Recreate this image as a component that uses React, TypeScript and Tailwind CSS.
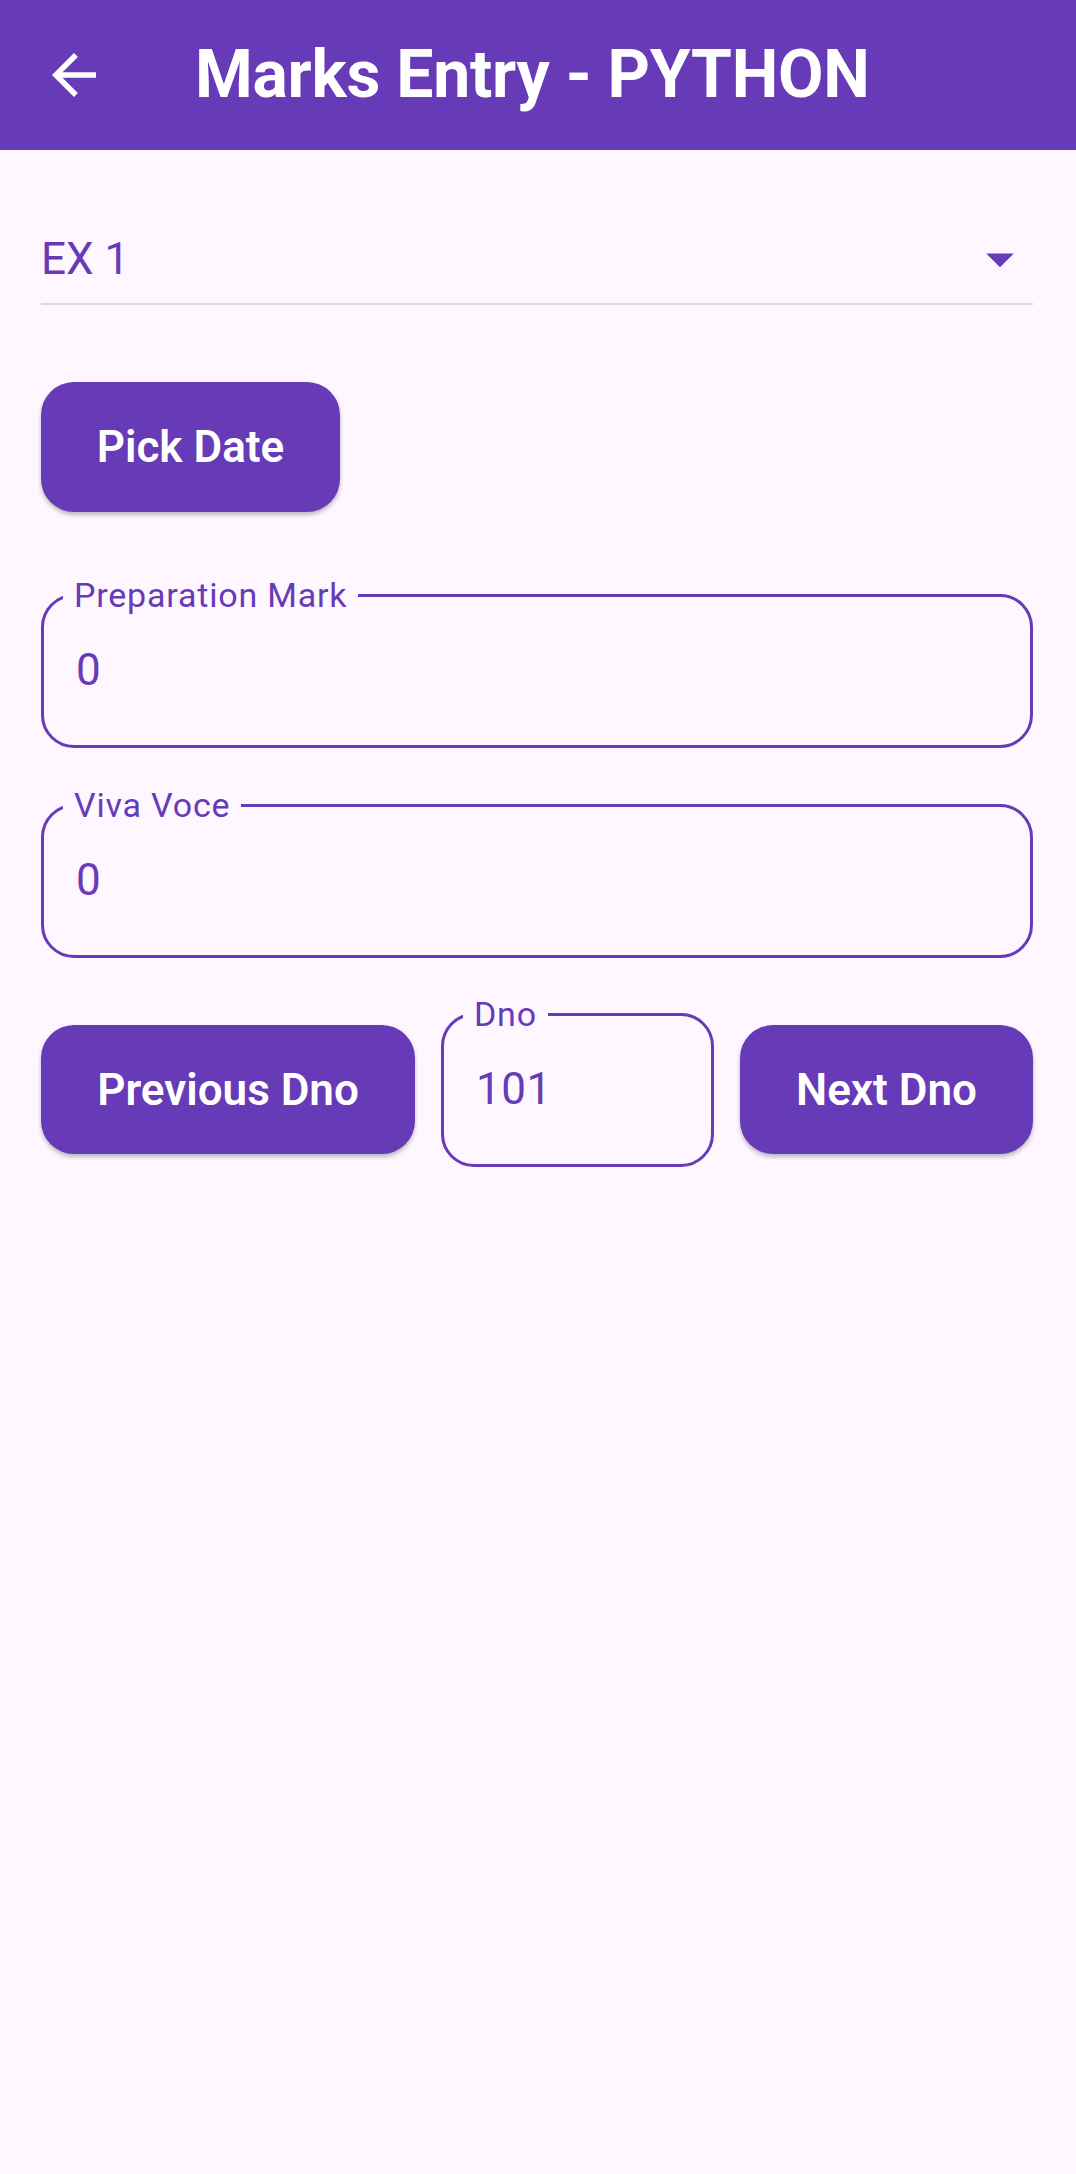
import React from "react"

const font = { fontFamily: "Roboto, 'Noto Sans', sans-serif" }

function OutlinedField({ label, value }: { label: string; value: string }) {
  return (
    <fieldset className="border-[3px] border-[#673AB7] rounded-[33px] w-full">
      <legend className="ml-[19px] px-[11px] text-[34px] leading-none tracking-[0.8px] text-[#673AB7]">{label}</legend>
      <div className="h-[133px] flex items-center pl-[32px] pb-[17px] text-[44px] leading-none tracking-[0.5px] text-[#673AB7]">
        {value}
      </div>
    </fieldset>
  )
}

export default function App() {
  return (
    <div className="min-h-screen bg-[#FEF7FF]" style={font}>
      {/* App bar */}
      <div className="h-[150px] bg-[#673AB7] flex items-center pl-[41px]">
        <svg width="66" height="66" viewBox="0 0 24 24" className="fill-white">
          <path d="M20 11H7.83l5.59-5.59L12 4l-8 8 8 8 1.41-1.41L7.83 13H20v-2z" />
        </svg>
        <h1 className="ml-[88px] text-[66px] font-bold leading-none text-white tracking-[-0.25px]">
          Marks Entry - PYTHON
        </h1>
      </div>

      <div className="pl-[41px] pr-[43px]">
        {/* Dropdown */}
        <div className="mt-[87px] flex items-center justify-between border-b-2 border-[#ddd5de] pb-[22px]">
          <span className="text-[44px] leading-none text-[#673AB7]">EX 1</span>
          <svg width="66" height="66" viewBox="0 0 24 24" className="fill-[#673AB7] -my-[11px]">
            <path d="M7 10l5 5 5-5z" />
          </svg>
        </div>

        <button className="mt-[77px] w-[299px] h-[130px] rounded-[33px] bg-[#673AB7] text-white text-[44px] font-semibold shadow-[0_3px_4px_rgba(0,0,0,0.25)]">
          Pick Date
        </button>

        <div className="mt-[66px]">
          <OutlinedField label="Preparation Mark" value="0" />
        </div>

        <div className="mt-[40px]">
          <OutlinedField label="Viva Voce" value="0" />
        </div>

        {/* Dno navigation */}
        <div className="mt-[39px] flex items-start">
          <button className="mt-[28px] w-[374px] h-[129px] rounded-[33px] bg-[#673AB7] text-white text-[44px] font-semibold shadow-[0_3px_4px_rgba(0,0,0,0.25)]">
            Previous Dno
          </button>
          <div className="ml-[26px] w-[273px]">
            <OutlinedField label="Dno" value="101" />
          </div>
          <button className="mt-[28px] ml-[26px] flex-1 h-[129px] rounded-[33px] bg-[#673AB7] text-white text-[44px] font-semibold shadow-[0_3px_4px_rgba(0,0,0,0.25)]">
            Next Dno
          </button>
        </div>
      </div>
    </div>
  )
}
